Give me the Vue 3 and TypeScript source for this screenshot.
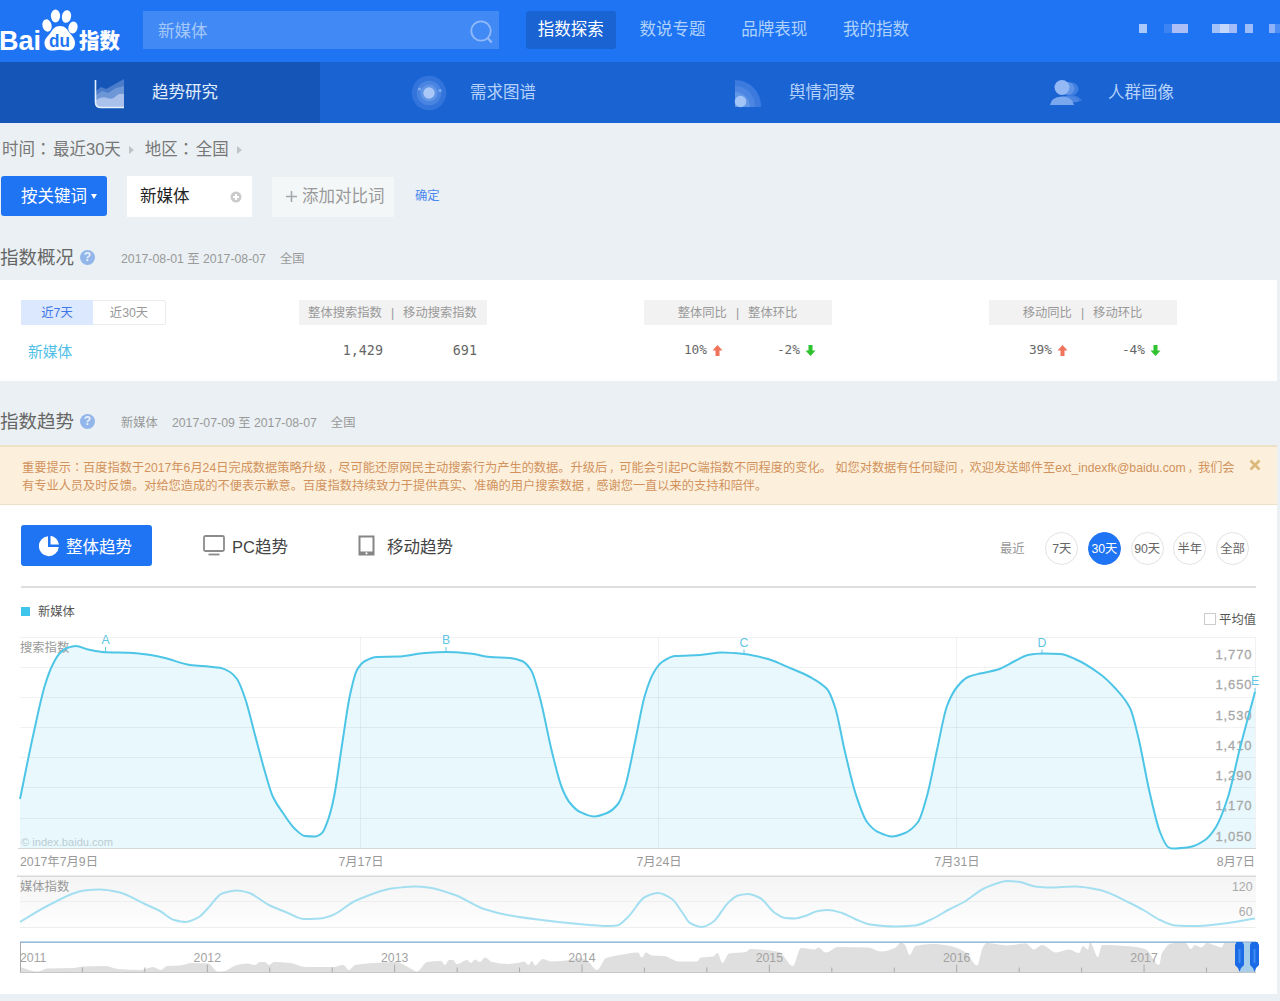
<script setup lang="ts">
type Point = [number, number]

const mainNav = ['指数探索', '数说专题', '品牌表现', '我的指数']
const subNav = ['趋势研究', '需求图谱', '舆情洞察', '人群画像']
const ranges = ['7天', '30天', '90天', '半年', '全部']
const notice = [
  '重要提示：百度指数于2017年6月24日完成数据策略升级，尽可能还原网民主动搜索行为产生的数据。升级后，可能会引起PC端指数不同程度的变化。 如您对数据有任何疑问，欢迎发送邮件至ext_indexfk@baidu.com，我们会',
  '有专业人员及时反馈。对给您造成的不便表示歉意。百度指数持续致力于提供真实、准确的用户搜索数据，感谢您一直以来的支持和陪伴。',
].map((line) => line.split(/([：，])/))

const blocks = [
  { x: 1139, w: 8, c: '#a9c8fb' }, { x: 1164, w: 8, c: '#3c83f3' }, { x: 1172, w: 16, c: '#adbdf5' },
  { x: 1212, w: 8, c: '#a3c2fa' }, { x: 1220, w: 9, c: '#c5d8fc' }, { x: 1229, w: 8, c: '#a4bbf9' },
  { x: 1245, w: 8, c: '#9dbcfa' }, { x: 1269, w: 6, c: '#8db2f9' }, { x: 1275, w: 5, c: '#4c8cf5' },
]

const parse = (s: string): Point[] => s.trim().split(/\s+/).map((p) => p.split(',').map(Number) as Point)

/* Monotone cubic through the points, so peaks and valleys never overshoot. */
function smooth(p: Point[]): string {
  const n = p.length
  const d = p.slice(1).map((q, i) => (q[1] - p[i][1]) / (q[0] - p[i][0]))
  const m = p.map((_, i) => {
    if (i === 0) return d[0]
    if (i === n - 1) return d[n - 2]
    return d[i - 1] * d[i] <= 0 ? 0 : (2 * d[i - 1] * d[i]) / (d[i - 1] + d[i])
  })
  let out = `M${p[0][0]},${p[0][1]}`
  for (let i = 1; i < n; i++) {
    const h = (p[i][0] - p[i - 1][0]) / 3
    out += `C${p[i - 1][0] + h},${p[i - 1][1] + m[i - 1] * h} ${p[i][0] - h},${p[i][1] - m[i] * h} ${p[i][0]},${p[i][1]}`
  }
  return out
}

const searchLine = smooth(parse(`20,799 33,736 45,685 53,664 60,653 67,648 76,646 88,649.5 105,652.3 130,652.7 147,654.5 165,658
190,665 210,666.7 220,667.8 230,672 237,679 245,698 255,735 265,772 273,797 283,813 295,829 305,836 315,836.5 322,833 328,820
334,797 342,745 350,695 357,670 365,661 377,657 398,656.6 425,653 446,652 470,653.5 490,657 510,658 522,661 531,670 540,698
552,752 562,788 570,803 580,812 594,816.5 607,813 618,804 625,787 635,742 645,695 654,672 662,662 675,656 700,655 722,652.5
744,654 768,659 790,668 810,677 827,689 835,707 845,752 856,795 867,822 878,832 892,836.5 905,833 918,822 927,796 937,750
947,706 957,687 968,677 980,673.5 998,669.5 1015,661 1028,655 1043,653.5 1060,654 1075,659 1100,674 1115,688 1130,708
1138,736 1150,794 1160,832 1168,847 1172,848.5 1190,847 1205,840 1216,827 1228,797 1240,748 1255,692`))

const mediaLine = smooth(parse(`20,922 50,904.5 84,890.5 100,889.5 118,892 147,905 160,911 174,920 186,922 199,917 209,907 222,893.5
237,890.5 248,892.5 269,905 288,913 304,919 320,918.5 333,915 355,901 392,888.5 415,886.5 428,887.5 455,895 484,909 510,915.5
550,921 590,925 605,926 617,925.5 628,917 645,897 658,893 672,899 682,912 690,923 702,927 713,922 728,903 738,895.5
748,894 760,898 775,913 785,918 795,918.5 805,916 818,911 828,910 842,913 855,919 870,924.5 895,926.5 915,925.5 930,920
950,909 964,902 985,888 1008,881 1020,882 1035,886.5 1050,887.5 1075,886.5 1100,890 1130,903 1145,911 1160,920 1175,925.5
1195,926 1220,924 1255,918.5`))

const historyArea = smooth(parse(`20,967 37,971.5 43,970 47,968.5 73,968 84,966.5 106,966 118,969 141,970 153,967 161,970 167,966
180,965.5 192,963 208,963.5 218,971.5 222,971.5 237,965 247,963.5 255,965 260,962 265,962 269,965 274,962 290,963 306,967
333,967 343,965 349,970 355,965 375,963 396,962 408,967 417,971.5 427,962 441,961 445,965 449,960 453,960 457,964 467,960
471,963 475,959.5 480,962 485,957.5 492,962 508,964 520,962.5 524,961.5 528.5,965 532,961 535,965.5 543,959 551,961.5
571,960 580,958 588,961.5 597,970 606,958 620,955 638,952.5 642,957.5 646,952.5 652,955.5 664,956 679,961.5 697,961.5
701,957.5 713,956.5 717.5,953 722.5,963 729,953.5 746,952 750,949 779,952 793,966 801,948 815,949.5 818,947.5 826,952.5
838,947 868,947.5 881,951.5 895,948 901,942.5 905,945 909.5,955 915.5,946 932,944 948,945.5 966,952.5 977,965.5 983,947
987,943 1007,945.5 1026,943.5 1034,949.5 1042,945 1056,952.5 1069,949.5 1079,953 1083,946 1088,949.5 1090,942.5 1098,957
1102,945 1132,946.5 1146,949.5 1159,965 1162,953 1171,943.5 1185,942.5 1191,949 1195,945 1201,947.5 1207,943 1215,945.5
1221.6,947.5 1224.5,943 1256,942.5`))

const gridRows = [637.5, 667.5, 697.5, 727.5, 757.5, 787.5, 818.5]
const gridCols = [360.5, 658.5, 956.5, 1255.5]
const yLabels = ['1,770', '1,650', '1,530', '1,410', '1,290', '1,170', '1,050']
const dates = [
  { t: '2017年7月9日', x: 20, a: 'start' }, { t: '7月17日', x: 361, a: 'middle' }, { t: '7月24日', x: 659, a: 'middle' },
  { t: '7月31日', x: 957, a: 'middle' }, { t: '8月7日', x: 1255, a: 'end' },
] as const
const marks = [
  { t: 'A', x: 105.5, y: 644 }, { t: 'B', x: 446, y: 644 }, { t: 'C', x: 744, y: 646.5 },
  { t: 'D', x: 1042, y: 646.5 }, { t: 'E', x: 1255, y: 685 },
]
const ticks = Array.from({ length: 19 }, (_, i) => ({ x: 82.4 + i * 62.45, tall: i % 3 === 2 }))
const years = [2012, 2013, 2014, 2015, 2016, 2017]
</script>

<template>
  <div class="page">
    <header class="top">
      <svg class="logo" width="122" height="62" viewBox="0 0 122 62">
        <g fill="#fff">
          <text x="-1" y="49.5" class="brand" font-size="28" textLength="42" lengthAdjust="spacingAndGlyphs">Bai</text>
          <ellipse cx="47" cy="25.5" rx="4.6" ry="6.2" transform="rotate(-14 47 25.5)" />
          <ellipse cx="55.5" cy="16" rx="4.6" ry="6.4" />
          <ellipse cx="66.5" cy="16.5" rx="4.6" ry="6.4" transform="rotate(10 66.5 16.5)" />
          <ellipse cx="73" cy="27.5" rx="4.6" ry="6" transform="rotate(14 73 27.5)" />
          <path d="M60 26c5 0 7 3 9 6 3 4 6 6 6 11 0 5-3 7.500-7 7.500-3 0-5-.8-8-.8s-5 .8-8 .8c-4 0-7.500-2.500-7.500-7.500 0-5 4-7 6.500-11 2-3 4-6 9-6z" />
          <text x="79" y="48" class="brand cn" font-size="21" textLength="41" lengthAdjust="spacingAndGlyphs">指数</text>
        </g>
        <text x="49" y="46.5" class="brand" font-size="18" fill="#1f74f3" textLength="21" lengthAdjust="spacingAndGlyphs">du</text>
      </svg>
      <div class="search">
        <span>新媒体</span>
        <svg width="24" height="24" viewBox="0 0 24 24" fill="none" stroke="#8fb9fa" stroke-width="1.8">
          <circle cx="12" cy="11" r="9.7" /><path d="M18.700 18l4 4.500" stroke-width="2.4" />
        </svg>
      </div>
      <nav class="main-nav">
        <a v-for="(n, i) in mainNav" :key="n" :class="{ on: i === 0 }">{{ n }}</a>
      </nav>
      <svg class="account" width="141" height="10" viewBox="1139 24 141 10">
        <rect v-for="b in blocks" :key="b.x" :x="b.x" y="24" :width="b.w" height="9" :fill="b.c" />
      </svg>
    </header>

    <nav class="sub-nav">
      <a v-for="(n, i) in subNav" :key="n" :class="{ on: i === 0 }">
        <svg width="36" height="36" viewBox="0 0 36 36">
          <template v-if="i === 0">
            <path d="M5 16l5-4 5 2 9-5 9-5v28H9q-4 0-4-4z" fill="#4a7cc9" />
            <path d="M5 20l6-4 6 2 8-5 8-2v21H9q-4 0-4-4z" fill="#6e97d7" />
            <path d="M5 25q6-4 11-2 6 2 9-2 3-3 8-2v13H9q-4 0-4-4z" fill="#a9c1eb" />
            <path d="M4.500 5v22q0 5.500 5.500 5.500H33" fill="none" stroke="#e4f0fd" stroke-width="1.6" />
          </template>
          <template v-else-if="i === 1">
            <circle cx="18" cy="18" r="17.3" fill="#3274db" /><circle cx="18" cy="18" r="12.3" fill="#4a84e1" />
            <circle cx="18" cy="18" r="8.5" fill="#5f94e6" /><circle cx="18" cy="18" r="5.7" fill="#a9c8f7" />
            <circle cx="8.5" cy="14" r="1.6" fill="#7caaf0" /><circle cx="29" cy="15.5" r="1.6" fill="#7caaf0" />
          </template>
          <template v-else-if="i === 2">
            <path d="M5 5a26 26 0 0 1 26 27H5z" fill="#3c7ade" /><path d="M5 11a20 20 0 0 1 20 21H5z" fill="#4c86e2" />
            <path d="M5 17a15 15 0 0 1 15 15H5z" fill="#6297e8" /><circle cx="10.5" cy="26.5" r="5.7" fill="#a3c4f7" />
          </template>
          <g v-else transform="translate(-1 0)">
            <circle cx="24" cy="14" r="6.5" fill="#3f7ddf" /><path d="M12 26q2-6 10-6 9 0 12 6z" fill="#3f7ddf" />
            <circle cx="20" cy="13.5" r="6.5" fill="#5e93e6" /><path d="M8 28q2-7 12-7 8 0 11 6z" fill="#4c86e2" />
            <circle cx="14" cy="12.5" r="7.5" fill="#94b9f5" /><path d="M2 30q1-8 12-8.500 11 .5 12 8.500z" fill="#7aa8ef" />
          </g>
        </svg>
        <span>{{ n }}</span>
      </a>
    </nav>

    <div class="filters">
      <span>时间<i class="colon">：</i>最近30天</span><b class="arrow"></b>
      <span class="area">地区<i class="colon">：</i>全国</span><b class="arrow"></b>
    </div>

    <div class="keywords">
      <button class="by"><span>按关键词</span><b></b></button>
      <div class="word">
        <span>新媒体</span>
        <svg width="12" height="12" viewBox="0 0 12 12"><circle cx="6" cy="6" r="5.5" fill="#cbcbcb" /><path d="M6 3v6M3 6h6" stroke="#fff" stroke-width="2" /></svg>
      </div>
      <div class="add">
        <svg width="11" height="11" viewBox="0 0 11 11"><path d="M5.500 0v11M0 5.500h11" stroke="#a5a8aa" stroke-width="1.6" /></svg>
        <span>添加对比词</span>
      </div>
      <a>确定</a>
    </div>

    <div class="title first">
      <h2>指数概况</h2><em>?</em><span>2017-08-01 至 2017-08-07</span><span>全国</span>
    </div>

    <section class="overview">
      <div class="col who">
        <div class="tabs"><span class="on">近7天</span><span>近30天</span></div>
        <p>新媒体</p>
      </div>
      <div class="col">
        <div class="head">整体搜索指数<u>|</u>移动搜索指数</div>
        <div class="vals big"><span>1,429</span><span>691</span></div>
      </div>
      <div class="col">
        <div class="head">整体同比<u>|</u>整体环比</div>
        <div class="vals">
          <span>10%<svg width="11" height="11" viewBox="0 0 10 11"><path d="M5 0l5 5.500H7V11H3V5.500H0z" fill="#f0745c" /></svg></span>
          <span>-2%<svg width="11" height="11" viewBox="0 0 10 11"><path d="M5 11l5-5.500H7V0H3v5.500H0z" fill="#2ec22e" /></svg></span>
        </div>
      </div>
      <div class="col">
        <div class="head">移动同比<u>|</u>移动环比</div>
        <div class="vals">
          <span>39%<svg width="11" height="11" viewBox="0 0 10 11"><path d="M5 0l5 5.500H7V11H3V5.500H0z" fill="#f0745c" /></svg></span>
          <span>-4%<svg width="11" height="11" viewBox="0 0 10 11"><path d="M5 11l5-5.500H7V0H3v5.500H0z" fill="#2ec22e" /></svg></span>
        </div>
      </div>
    </section>

    <div class="title second">
      <h2>指数趋势</h2><em>?</em><span>新媒体</span><span>2017-07-09 至 2017-08-07</span><span>全国</span>
    </div>

    <section class="trend">
      <div class="notice">
        <div>
          <p v-for="(line, i) in notice" :key="i"><template v-for="(s, j) in line" :key="j"><i v-if="j % 2" :class="s === '：' ? 'colon' : 'comma'">{{ s }}</i><template v-else>{{ s }}</template></template></p>
        </div>
        <svg width="12" height="12" viewBox="0 0 12 12"><path d="M1.500 1.500l9 9M10.500 1.500l-9 9" stroke="#dcb87c" stroke-width="2.6" /></svg>
      </div>

      <div class="toolbar">
        <a class="kind on">
          <svg width="22" height="22" viewBox="0 0 22 22"><path d="M10 1.200A10 10 0 1 0 20.800 12H10z" fill="#fff" /><path d="M12.500 0.800A10 10 0 0 1 21 9.500h-8.500z" fill="#fff" /></svg>
          整体趋势
        </a>
        <a class="kind pc">
          <svg width="22" height="21" viewBox="0 0 22 21"><rect x="1" y="1" width="20" height="15" rx="1.5" fill="none" stroke="#8b8b8b" stroke-width="1.8" /><path d="M5.500 19.500h11" stroke="#8b8b8b" stroke-width="1.8" /></svg>
          PC趋势
        </a>
        <a class="kind mobile">
          <svg width="17" height="21" viewBox="0 0 17 21"><path d="M.5.500h16v20H.500zM2.500 2.500v14h12v-14z" fill="#858585" fill-rule="evenodd" /><circle cx="8.5" cy="18.3" r="1.1" fill="#fff" /></svg>
          移动趋势
        </a>
        <div class="ranges">
          <label>最近</label>
          <span v-for="r in ranges" :key="r" :class="{ on: r === '30天' }">{{ r }}</span>
        </div>
      </div>

      <div class="legend">
        <div class="series"><b></b>新媒体</div>
        <div class="avg"><b></b>平均值</div>
      </div>

      <svg class="chart" width="1277" height="364" viewBox="0 630 1277 364">
        <defs>
          <linearGradient id="mediaBg" x1="0" y1="0" x2="0" y2="1"><stop offset="0" stop-color="#f4f4f4" /><stop offset="1" stop-color="#fefefe" /></linearGradient>
        </defs>
        <path :d="searchLine + 'V848.5H20Z'" fill="#e9f8fd" />
        <g stroke="#000" stroke-opacity=".05">
          <path v-for="y in gridRows" :key="y" :d="`M20 ${y}H1255`" />
          <path v-for="x in gridCols" :key="x" :d="`M${x} 637V848`" />
        </g>
        <text x="20" y="651.5" fill="#999">搜索指数</text>
        <g class="ylab"><text v-for="(l, i) in yLabels" :key="l" x="1251.500" :y="659 + i * 30.25" text-anchor="end" textLength="36">{{ l }}</text></g>
        <text x="21" y="845.5" class="mark" textLength="92" lengthAdjust="spacingAndGlyphs">© index.baidu.com</text>
        <path d="M18 848.500H1256" stroke="#d2d8da" />
        <path :d="searchLine" fill="none" stroke="#4dc5e6" stroke-width="2" />
        <g fill="#62c5e4"><text v-for="m in marks" :key="m.t" :x="m.x" :y="m.y" text-anchor="middle">{{ m.t }}</text></g>
        <path v-for="m in marks" :key="m.t" :d="`M${m.x} ${m.y + 3}v5`" stroke="#62c5e4" />
        <text v-for="d in dates" :key="d.t" :x="d.x" y="866" :text-anchor="d.a" fill="#999">{{ d.t }}</text>

        <rect x="20" y="877" width="1236" height="50" fill="url(#mediaBg)" />
        <path d="M17 876.300H1256" stroke="#d9d9d9" stroke-width="1.4" />
        <path d="M20 901.500H1256M20 927.500H1256" stroke="#eee" />
        <text x="20" y="890.5" fill="#999">媒体指数</text>
        <g fill="#aaa"><text x="1252.500" y="890.5" text-anchor="end">120</text><text x="1252.500" y="915.5" text-anchor="end">60</text></g>
        <path :d="mediaLine" fill="none" stroke="#a4dff1" stroke-width="2" />

        <path :d="historyArea + 'V972.5H20Z'" fill="#dfdfdf" />
        <rect x="1240" y="943" width="15" height="29" fill="#a6cdea" />
        <path d="M20.500 942V972" stroke="#aaa" /><path d="M20 972.500H1256" stroke="#c6c6c6" />
        <path d="M20 942.200H1256" stroke="#7ba9d3" stroke-width="1.3" />
        <path v-for="t in ticks" :key="t.x" :d="`M${t.x} ${t.tall ? 964.5 : 967.5}V972`" stroke="#aaa" />
        <g fill="#a3a3a3"><text x="20" y="962">2011</text><text v-for="(y, i) in years" :key="y" :x="207.3 + i * 187.35" y="962" text-anchor="middle">{{ y }}</text></g>
        <g v-for="x in [1239.5, 1254.5]" :key="x">
          <path :d="`M${x - 3} 942h6l1.500 3v20l-3 3-1.500 4-1.500-4-3-3v-20z`" fill="#1b6be6" />
          <path :d="`M${x} 949v14`" stroke="#3f8cf5" stroke-width="2" />
        </g>
      </svg>
    </section>
  </div>
</template>

<style>
html, body { margin: 0; background: #eaf0f3; }
</style>

<style scoped>
.page { width: 1280px; height: 1001px; overflow: hidden; background: #eaf0f3; font-family: "Liberation Sans", "Noto Sans CJK SC", sans-serif; font-size: 12.3px; color: #999; }
.page * { box-sizing: border-box; }
i { font-style: normal; }
.colon { font-family: "Noto Sans CJK TC", sans-serif; line-height: 1; }
.comma { font-size: 10px; margin-left: 2.2px; line-height: 1; }
.top { height: 62px; background: #1f74f3; display: flex; align-items: center; }
.logo { width: 122px; flex: none; }
.brand { font-family: "Liberation Sans", sans-serif; font-weight: 700; }
.brand.cn { font-family: "Noto Sans CJK SC", sans-serif; font-weight: 900; }
.search { margin: 0 27px 2px 21px; width: 356px; height: 38px; flex: none; background: #4189f5; display: flex; align-items: center; justify-content: space-between; padding: 0 6px 0 15px; font-size: 16.5px; color: #a5c8fa; }
.search svg { margin-top: 3px; }
.main-nav { display: flex; gap: 12px; margin: 0 0 2px; flex: none; }
.main-nav a { width: 89.7px; height: 38px; line-height: 37px; text-align: center; font-size: 16.5px; color: #afd2fb; border-radius: 3px; }
.main-nav a.on { background: #1963d2; color: #fff; }
.account { margin: 0 0 5px auto; flex: none; }
.sub-nav { height: 61px; display: flex; background: #1a63d3; }
.sub-nav a { width: 319px; display: flex; align-items: center; padding-left: 91px; gap: 23px; font-size: 16.5px; color: #b5d3fa; flex: none; }
.sub-nav a.on { width: 320px; gap: 25px; background: #1655b8; color: #e0effd; }
.sub-nav a span { padding-bottom: 4px; }
.filters { height: 53px; display: flex; align-items: center; padding-left: 2px; font-size: 16.5px; color: #777; white-space: nowrap; }
.filters span { padding-bottom: 3px; }
.filters .colon { margin-right: 1.5px; }
.arrow { width: 0; height: 0; border: 4px solid transparent; border-left: 5px solid #c0c4c6; border-right: 0; margin-left: 8px; }
.filters .area { margin-left: 11px; }
.keywords { height: 41px; display: flex; align-items: center; }
.keywords span, .keywords a { padding-bottom: 3px; }
.by { width: 106px; height: 40px; margin: 0 0 1px 1px; border: 0; border-radius: 3px; background: #1f74f3; color: #fff; font: inherit; font-size: 16.5px; padding: 0 0 0 20px; display: flex; align-items: center; gap: 4px; flex: none; white-space: nowrap; }
.by b { border: 3.5px solid transparent; border-top: 5px solid #fff; border-bottom: 0; }
.word { width: 125px; height: 41px; margin-left: 20px; background: #fff; color: #222; font-size: 16.5px; display: flex; align-items: center; justify-content: space-between; padding: 0 10px 0 13px; }
.add { width: 122px; height: 40px; margin-left: 20px; background: #f4f7f8; color: #999; font-size: 16.5px; display: flex; align-items: center; gap: 5px; padding-left: 14px; white-space: nowrap; }
.keywords a { margin-left: 21px; color: #4a87f0; }
.title { display: flex; align-items: center; white-space: nowrap; }
.title h2 { margin: 0; font-size: 18.5px; font-weight: 400; color: #666; width: 80px; padding-bottom: 3px; }
.title em { width: 15px; height: 15px; border-radius: 50%; background: #92b6ea; color: #e9f1fc; font-size: 12px; font-weight: 700; font-style: normal; line-height: 15px; text-align: center; margin-right: 26px; }
.title span { margin-right: 14px; padding-top: 1px; }
.first { height: 63px; padding-bottom: 9px; padding-top: 26px; }
.second { height: 65px; padding-top: 15px; }
.overview { width: 1277px; height: 101px; background: #fff; display: flex; padding: 20px 0 0 21px; }
.col { width: 345px; flex: none; }
.who { width: 278px; }
.tabs { display: flex; width: 145px; height: 25px; border: 1px solid #ebebeb; border-radius: 2px; line-height: 25px; text-align: center; }
.tabs span { flex: 1; height: 23px; }
.tabs .on { background: #dce8fd; color: #3f76e8; height: 25px; margin: -1px 0 -1px -1px; line-height: 27px; }
.who p { margin: 17px 0 0 7px; font-size: 14.8px; line-height: 20px; color: #52bfe8; }
.head { width: 188px; height: 25px; line-height: 27px; background: #f2f2f2; text-align: center; white-space: nowrap; padding-right: 1px; }
.head u { text-decoration: none; margin: 0 9px; }
.vals { display: flex; width: 188px; padding: 16px 15px 0 0; font-family: "DejaVu Sans Mono", monospace; font-size: 12.8px; color: #666; line-height: 18px; }
.vals span { width: 92px; display: flex; align-items: center; justify-content: flex-end; gap: 5px; flex: none; margin-left: -13px; }
.vals span + span { margin-left: 1px; }
.vals.big { font-size: 13.4px; padding-top: 17px; }
.vals.big span { margin-left: -8px; }
.vals.big span + span { margin-left: 2px; }
.trend { width: 1277px; height: 549px; background: #fff; margin-top: -1px; }
.notice { height: 60px; background: #fcf0dc; border: solid #ece0c6; border-width: 2px 0 1px; color: #d1925c; padding: 12px 16px 0 22px; display: flex; justify-content: space-between; font-size: 12.22px; }
.notice p { margin: 0; line-height: 18px; height: 18px; white-space: nowrap; }
.toolbar { height: 83px; margin: 0 21px; border-bottom: 2px solid #dfdfdf; display: flex; align-items: center; }
.kind { display: flex; align-items: center; gap: 7px; height: 41px; font-size: 16.5px; color: #444; white-space: nowrap; }
.kind.on { width: 131px; background: #1f74f3; color: #fff; border-radius: 3px; padding-left: 17px; gap: 6px; }
.kind.pc { margin-left: 51px; }
.kind.mobile { margin-left: 70px; gap: 12px; }
.ranges { margin-left: auto; margin-right: 7px; padding-top: 5px; display: flex; align-items: center; gap: 9.7px; }
.ranges label { margin-right: 11px; }
.ranges span { width: 33px; height: 33px; border: 1.5px solid #e2e2e2; border-radius: 50%; color: #666; display: flex; align-items: center; justify-content: center; white-space: nowrap; padding-bottom: 1px; }
.ranges .on { background: #1f74f3; border-color: #1f74f3; color: #fff; }
.legend { height: 42px; display: flex; justify-content: space-between; padding: 0 21px; color: #555; }
.series, .avg { display: flex; align-items: center; }
.series { height: 46px; gap: 8px; }
.series b { width: 9px; height: 9px; background: #3fc4ec; }
.avg { height: 62px; gap: 3px; }
.avg b { width: 12px; height: 12px; border: 1px solid #ccc; }
.chart { display: block; }
.chart text { font-size: 12.3px; }
.chart .ylab text { font-size: 13px; fill: #a8a8a8; stroke: #a8a8a8; stroke-width: 0.3px; }
.chart .mark { font-size: 11px; fill: #b9cdd4; }
</style>
